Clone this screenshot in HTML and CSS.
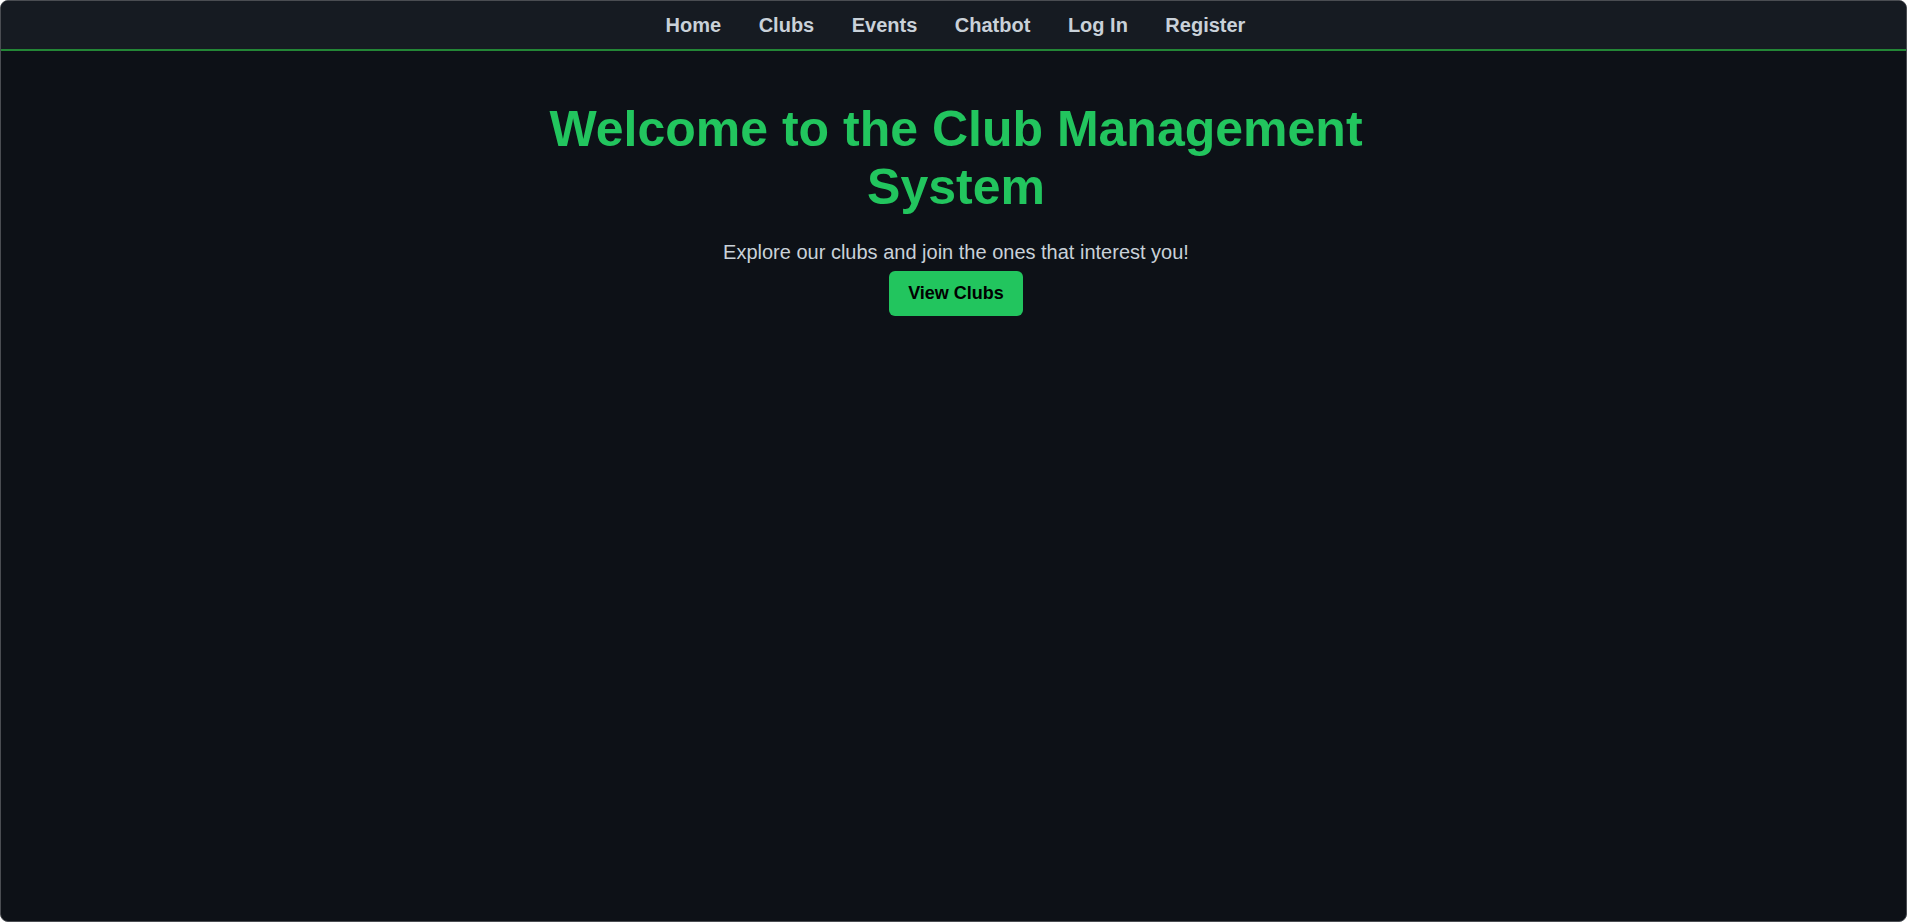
FILE: index.html
```html
<!DOCTYPE html>
<html lang="en">
<head>
<meta charset="utf-8">
<title>Club Management System</title>
<link rel="stylesheet" href="styles.css">
</head>
<body>
<div class="frame">
  <nav class="navbar">
    <a class="nav-link" href="#">Home</a>
    <a class="nav-link" href="#">Clubs</a>
    <a class="nav-link" href="#">Events</a>
    <a class="nav-link" href="#">Chatbot</a>
    <a class="nav-link" href="#">Log In</a>
    <a class="nav-link" href="#">Register</a>
  </nav>
  <main class="hero">
    <h1 class="hero-title">Welcome to the Club Management System</h1>
    <p class="hero-text">Explore our clubs and join the ones that interest you!</p>
    <a class="btn" href="#">View Clubs</a>
  </main>
</div>
</body>
</html>
```

FILE: styles.css
```css
html, body {
  margin: 0;
  padding: 0;
  background: #ffffff;
}

body {
  font-family: "Liberation Sans", Arial, sans-serif;
}

.frame {
  box-sizing: border-box;
  height: 922px;
  border: 1px solid #4a4d52;
  border-radius: 8px;
  background: #0d1117;
  overflow: hidden;
  display: flex;
  flex-direction: column;
}

.navbar {
  height: 48px;
  background: #161b22;
  border-bottom: 2px solid #238636;
  display: flex;
  justify-content: center;
  align-items: center;
  gap: 37.5px;
  padding-left: 4px;
}

.nav-link {
  color: #c9d1d9;
  text-decoration: none;
  font-weight: bold;
  font-size: 20px;
  line-height: 23px;
}

.hero {
  display: flex;
  flex-direction: column;
  align-items: center;
  padding: 50px 0 0 5px;
}

.hero-title {
  width: 900px;
  margin: 0 0 25px;
  text-align: center;
  color: #22c55e;
  font-size: 50px;
  line-height: 57.5px;
  font-weight: bold;
}

.hero-text {
  margin: 0 0 7px;
  color: #c9d1d9;
  font-size: 20px;
  line-height: 23px;
}

.btn {
  display: inline-block;
  background: #22c55e;
  color: #000000;
  text-decoration: none;
  font-weight: bold;
  font-size: 18px;
  line-height: 21px;
  padding: 12px 19px;
  border-radius: 6px;
}
```
